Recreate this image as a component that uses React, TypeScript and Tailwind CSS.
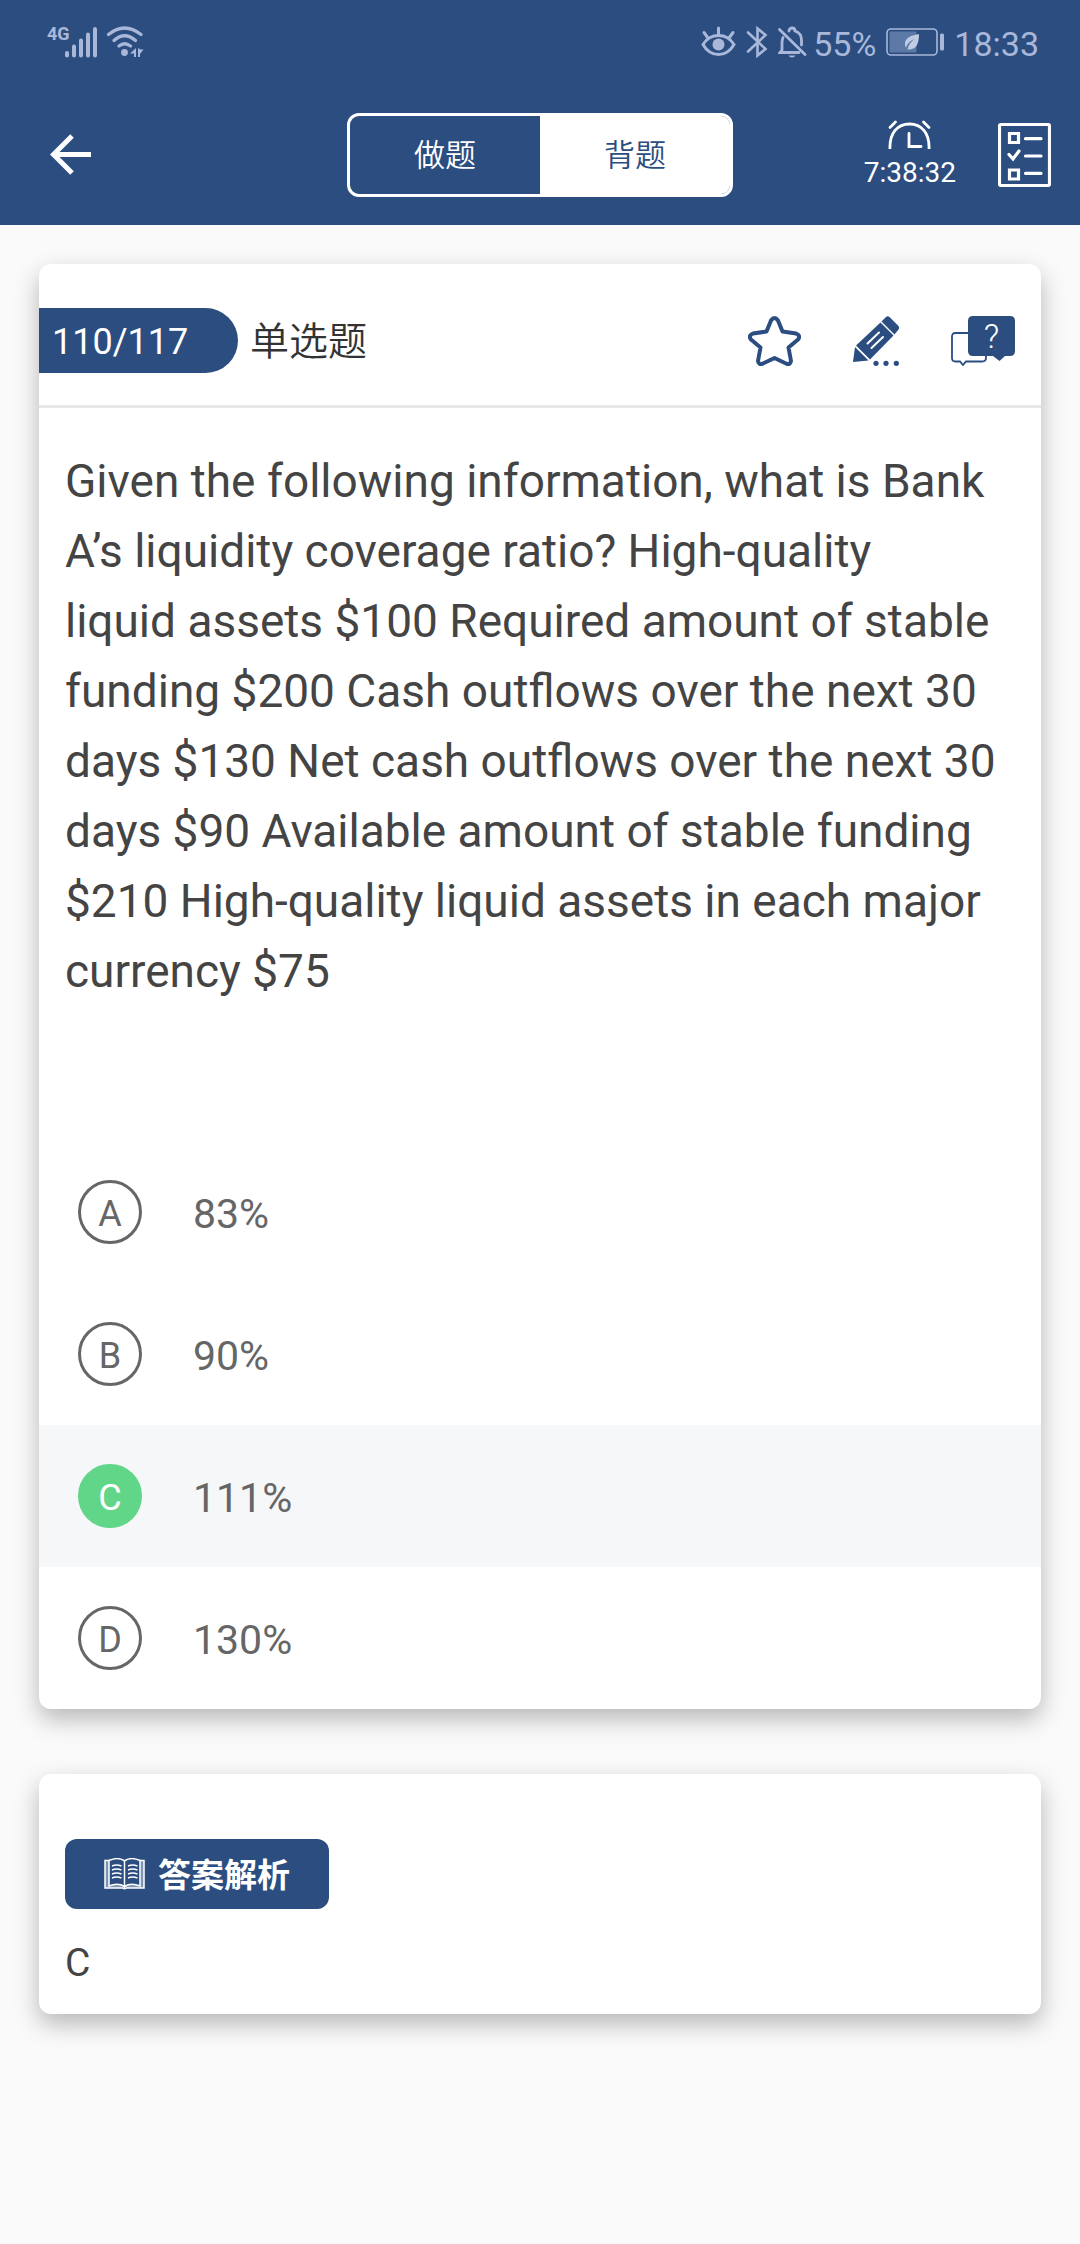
import React, { useState } from 'react';

type Mode = 'practice' | 'recite';

interface Option {
  key: string;
  text: string;
}

const options: Option[] = [
  { key: 'A', text: '83%' },
  { key: 'B', text: '90%' },
  { key: 'C', text: '111%' },
  { key: 'D', text: '130%' },
];

const modes: { id: Mode; label: string }[] = [
  { id: 'practice', label: '做题' },
  { id: 'recite', label: '背题' },
];

const SignalIcon = () => (
  <svg width="34" height="32" viewBox="0 0 34 32" stroke="currentColor" strokeWidth="4" strokeLinecap="round">
    <path d="M3 27v2.5M10 20.5v9M17 14.5v15M24 8.5v21M31 3v26.5" />
  </svg>
);

const WifiIcon = () => (
  <svg width="38" height="32" viewBox="0 0 38 32" fill="none" stroke="currentColor" strokeWidth="3.2" strokeLinecap="round">
    <path d="M2.5 8.5Q18.5 -4.5 35 8.5M8 14.5Q18.5 5 29.5 14.5M13 20Q18.5 15.5 24.5 20" />
    <circle cx="18.5" cy="26.5" r="3.4" fill="currentColor" stroke="none" />
    <path d="M24 27.5L30 22v9h-2v-3.5zM32 22v9h2v-3l3.500-4.500h-3z" fill="currentColor" stroke="none" />
  </svg>
);

const EyeIcon = () => (
  <svg width="35" height="32" viewBox="0 0 35 32" fill="none" stroke="currentColor" strokeWidth="3" strokeLinecap="round">
    <path d="M2 18.5C6 12 11 9.5 17.5 9.5S29 12 33 18.5C29 25.5 24 28.5 17.5 28.5S6 25.5 2 18.5z" />
    <path d="M17.5 2v7M3 6.5l4 5.5M32 6.5l-4 5.5" />
    <circle cx="17.5" cy="18.5" r="6" fill="currentColor" stroke="none" />
  </svg>
);

const BluetoothIcon = () => (
  <svg width="22" height="32" viewBox="0 0 22 32" fill="none" stroke="currentColor" strokeWidth="2.6" strokeLinecap="round">
    <path d="M2 6.5l17.5 16.5-8 6.5V2.5l8 6.500L2 25.5" />
  </svg>
);

const BellOffIcon = () => (
  <svg width="29" height="32" viewBox="0 0 29 32" fill="none" stroke="currentColor" strokeWidth="2.8" strokeLinecap="round">
    <path d="M1.5 3.5l25.5 25" />
    <path d="M5 11.5c-.8 2-1 3.5-1 5.5v7l-2 2.5h19M11 5c0-4 6-4 6 0 4.5 1.5 6.5 5 6.5 9v5" />
    <path d="M10.5 29.5h7c-1 2.5-6 2.5-7 0z" fill="currentColor" stroke="none" />
  </svg>
);

const BatteryIcon = () => (
  <svg width="58" height="28" viewBox="0 0 58 28" fill="none">
    <rect x="1" y="1" width="50" height="26" rx="4" stroke="currentColor" strokeWidth="1.6" />
    <rect x="3.5" y="3.5" width="27" height="21" rx="1" fill="#5d79a6" />
    <rect x="54" y="5.5" width="4" height="17" rx="1.5" fill="currentColor" />
    <path d="M33 6c-9 1.5-14 4.500-14 10 0 1.500.3 2.500 1 3.500 2-5 5-7 8.500-8.500-3.500 2.500-6 6-7 10.500 8 .5 11.500-4.500 11.500-15.500z" fill="#c0cce4" />
  </svg>
);

const BackIcon = () => (
  <svg width="42" height="42" viewBox="0 0 42 42" fill="none" stroke="currentColor" strokeWidth="5">
    <path d="M22 2L3.5 20.5L22 39M4 20.5h37" />
  </svg>
);

const ClockIcon = () => (
  <svg width="48" height="29" viewBox="0 0 48 29" fill="none" stroke="currentColor" strokeWidth="2.8" strokeLinecap="round">
    <path d="M4 30C3 12.5 12 4 23.5 4S44 12.5 43 30" />
    <path d="M23 13.5v13h12M4 7.500L9.500 2M37.500 2L43 7.500" />
  </svg>
);

const ListIcon = () => (
  <svg width="53" height="64" viewBox="0 0 53 64" fill="none" stroke="currentColor" strokeWidth="3.2">
    <rect x="1.5" y="1.5" width="50" height="61" rx="1.5" />
    <path d="M11.5 10.5h9v9h-9zM11.5 47h9v9h-9z" />
    <path d="M27.5 15.7h15.5M27.5 33h15.5M27.5 50.3h15.5M11 31.5l4 4.500 6-8" strokeLinecap="round" />
  </svg>
);

const StarIcon = () => (
  <svg width="53" height="50" viewBox="0 0 53 50" fill="none" stroke="currentColor" strokeWidth="4" strokeLinejoin="round">
    <path d="M23 4.5Q26.5 -.5 30 4.5L34.5 15.5L48 17.5Q53 19.5 50 23.5L40.5 31.5L43 45Q42 49.5 38 47.5L26.5 42L15 47.5Q11 49.5 10 45L12.5 31.5L3 23.5Q0 19.5 5 17.5L18.5 15.5z" />
  </svg>
);

const PencilIcon = () => (
  <svg width="46" height="50" viewBox="0 0 46 50" fill="currentColor">
    <path d="M0 46L2 31L15.5 44.5z" />
    <path d="M3 29.5L27.5 6.5L40.5 19.5L17 43.5z" />
    <path d="M28.5 5.5L33 1Q34.5 -.5 36.5 1L45 9.5Q47 11.5 45.5 13.5L41.5 18.5z" />
    <path d="M14.5 27.5L26 16.5M18.5 32L30 21" stroke="#fff" strokeWidth="2" strokeLinecap="round" />
    <circle cx="23" cy="47.3" r="2.6" />
    <circle cx="33" cy="47.3" r="2.6" />
    <circle cx="43.3" cy="47.3" r="2.6" />
  </svg>
);

const AskIcon = () => (
  <svg width="64" height="50" viewBox="0 0 64 50">
    <path
      d="M17 17H4.5Q1 17 1 20.5V42Q1 45.5 4.5 45.5H9L12 49L15 45.5H31Q35 45.5 35 42V40"
      fill="none"
      stroke="currentColor"
      strokeWidth="1.8"
    />
    <path d="M22 0H59Q64 0 64 5V35Q64 40 59 40H54L48.5 45L42 40H22Q17 40 17 35V5Q17 0 22 0z" fill="currentColor" />
    <text x="40.5" y="32" textAnchor="middle" fill="#fff" fontFamily="Roboto" fontWeight="300" fontSize="34">
      ?
    </text>
  </svg>
);

const BookIcon = () => (
  <svg width="41" height="33" viewBox="0 0 41 33" fill="none" stroke="currentColor" strokeWidth="1.5">
    <path d="M1 2.5V30h17.5q2 1.5 4 0H40V2.5z" fill="#fff" fillOpacity=".4" />
    <path d="M5 2.5Q14 -1.5 20.5 3Q27 -1.5 36 2.5V28Q27 24.5 20.5 28.5Q14 24.5 5 28z" fill="#2b4d80" />
    <path d="M20.5 3v28" />
    <path d="M8 8q4.5-2 9.5 0M8 12q4.5-2 9.5 0M8 16q4.5-2 9.5 0M8 20q4.5-2 9.5 0M24 8q4.5-2 9.5 0M24 12q4.5-2 9.5 0M24 16q4.5-2 9.5 0M24 20q4.5-2 9.5 0" />
  </svg>
);

const StatusBar = () => (
  <div className="flex h-[84px] items-center justify-between pr-[41px] pl-[47px] text-[34px] leading-10 text-[#a9b8d9]">
    <div className="flex items-start">
      <span className="w-[17px] font-['Liberation_Sans_Narrow','Roboto',sans-serif] text-[18px] leading-4 font-bold">4G</span>
      <SignalIcon />
      <div className="ml-2">
        <WifiIcon />
      </div>
    </div>
    <div className="flex items-center gap-[10px]">
      <div className="-mr-1 flex items-center gap-[10px]">
        <EyeIcon />
        <BluetoothIcon />
        <BellOffIcon />
      </div>
      <span className="pt-1">55%</span>
      <BatteryIcon />
      <span className="pt-1">18:33</span>
    </div>
  </div>
);

export default function App() {
  const [mode, setMode] = useState<Mode>('recite');
  const [selected, setSelected] = useState('C');

  return (
    <div className="min-h-screen bg-[#fafafa] font-['Roboto','Noto_Sans_CJK_SC',sans-serif]">
      <header className="bg-[#2b4d80] text-white">
        <StatusBar />
        <nav className="grid h-[141px] grid-cols-[1fr_auto_1fr] items-center pr-[29px] pl-[50px]">
          <button aria-label="返回" className="justify-self-start">
            <BackIcon />
          </button>
          <div className="-ml-[21px] flex h-[84px] w-[386px] overflow-hidden rounded-xl border-3 border-white">
            {modes.map((m) => (
              <button
                key={m.id}
                onClick={() => setMode(m.id)}
                className={`flex-1 pt-1 text-[31px] font-[350] ${mode === m.id ? 'bg-white text-[#2b4d80]' : 'text-white'}`}
              >
                {m.label}
              </button>
            ))}
          </div>
          <div className="flex items-center gap-[42px] justify-self-end">
            <div className="flex flex-col items-center gap-2">
              <ClockIcon />
              <span className="text-[28px] leading-8">7:38:32</span>
            </div>
            <button aria-label="答题卡">
              <ListIcon />
            </button>
          </div>
        </nav>
      </header>

      <main className="flex flex-col gap-[65px] px-[39px] py-[39px]">
        <section className="overflow-hidden rounded-xl bg-white shadow-[0_10px_24px_rgba(0,0,0,0.27)]">
          <div className="flex items-center border-b-3 border-[#e8e8e8] pt-11 pr-[26px] pb-8 text-[#2b4d80]">
            <span className="h-[65px] w-[199px] rounded-r-full bg-[#2b4d80] pl-[13px] text-[36px] leading-[69px] text-white">
              110/117
            </span>
            <h1 className="ml-3 h-[65px] text-[39px] leading-[69px] font-[350] text-[#333]">单选题</h1>
            <div className="ml-auto flex items-center gap-[52px]">
              <button aria-label="收藏">
                <StarIcon />
              </button>
              <button aria-label="笔记">
                <PencilIcon />
              </button>
              <button aria-label="提问">
                <AskIcon />
              </button>
            </div>
          </div>

          <p className="px-[26px] pt-[38px] pb-[135px] text-[46px] leading-[70px] text-[#444]">
            Given the following information, what is Bank A’s liquidity coverage ratio? High-quality
            <br />
            liquid assets $100 Required amount of stable funding $200 Cash outflows over the next 30 days $130 Net cash
            outflows over the next 30 days $90 Available amount of stable funding $210 High-quality liquid assets in
            each major currency $75
          </p>

          <div role="radiogroup" aria-label="单选题">
            {options.map((o) => (
              <label
                key={o.key}
                className={`flex h-[142px] items-center gap-[51px] pl-[39px] text-[#666] ${selected === o.key ? 'bg-[#f5f7f9]' : ''}`}
              >
                <input
                  type="radio"
                  name="answer"
                  className="sr-only"
                  checked={selected === o.key}
                  onChange={() => setSelected(o.key)}
                />
                <span
                  className={`flex size-16 items-center justify-center rounded-full border-3 pt-1 text-[36px] leading-none ${selected === o.key ? 'border-[#61d688] bg-[#61d688] text-white' : 'border-[#666]'}`}
                >
                  {o.key}
                </span>
                <span className="pt-1 text-[41px] leading-none">{o.text}</span>
              </label>
            ))}
          </div>
        </section>

        <section className="rounded-xl bg-white px-[26px] pt-[65px] pb-6 shadow-[0_10px_24px_rgba(0,0,0,0.27)]">
          <h2 className="flex h-[70px] w-[264px] items-center justify-center gap-[13px] rounded-xl bg-[#2b4d80] text-[33px] font-bold text-white">
            <BookIcon />
            <span className="pt-1">答案解析</span>
          </h2>
          <p className="mt-7 text-[39px] leading-[53px] text-[#444]">C</p>
        </section>
      </main>
    </div>
  );
}
